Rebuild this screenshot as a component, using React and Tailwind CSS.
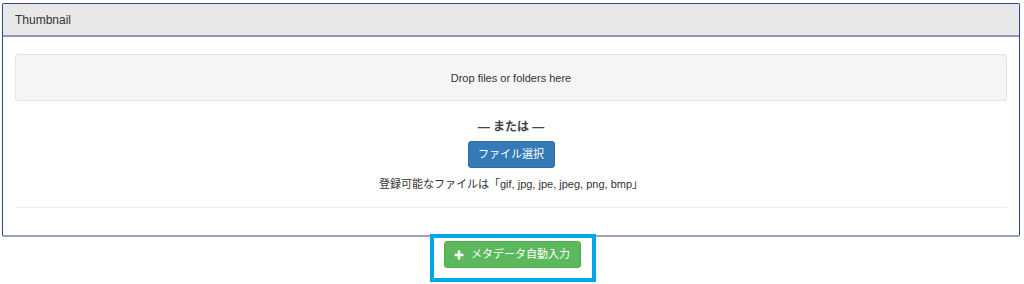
import React from "react";

const font = { fontFamily: '"Liberation Sans", "Noto Sans CJK JP", sans-serif' };

const PlusIcon = () => (
    <svg width="10" height="10" viewBox="0 0 10 10" className="shrink-0">
        <path d="M5 0.5v9M0.5 5h9" stroke="#fff" strokeWidth="2.6" />
    </svg>
);

export default function App() {
    return (
        <div className="w-[1024px] h-[284px] bg-white relative overflow-hidden text-[#333]" style={font}>
            <div className="ml-[2px] mt-[3px] w-[1018px] h-[234px] border border-[#2f4590] border-b-2 border-b-[#98a2c2] rounded-[2px] flex flex-col">
                <div className="h-[33px] shrink-0 bg-[#e8e8e8] border-b-2 border-[#8f99b8] flex items-center px-3 text-[12px]">
                    Thumbnail
                </div>
                <div className="px-3 pt-[17px] flex flex-col">
                    <div className="h-[47px] pt-[2px] bg-[#f5f5f5] border border-[#e3e3e3] rounded-[3px] flex items-center justify-center text-[11px] text-[#333]">
                        Drop files or folders here
                    </div>
                    <div className="mt-[18px] text-center text-[12px] font-bold text-[#444] leading-[16px]">— または —</div>
                    <div className="flex justify-center mt-[6px]">
                        <div className="w-[87px] h-[27px] bg-[#337ab7] border border-[#2e6da4] rounded-[3px] text-white text-[11px] flex items-center justify-center">
                            ファイル選択
                        </div>
                    </div>
                    <div className="mt-[9px] text-center text-[11px] leading-[14px]">登録可能なファイルは「gif, jpg, jpe, jpeg, png, bmp」</div>
                    <div className="mt-[16px] h-px bg-[#eeeeee]"></div>
                </div>
            </div>
            <div className="flex justify-center mt-[4px]">
                <div className="w-[137px] h-[27px] bg-[#5cb85c] border border-[#4cae4c] rounded-[3px] text-white text-[11px] flex items-center justify-center gap-[7px]">
                    <PlusIcon />
                    <span>メタデータ自動入力</span>
                </div>
            </div>
            <div className="absolute left-[430px] top-[234px] w-[166px] h-[48px] border-4 border-[#00a7e8]"></div>
        </div>
    );
}
